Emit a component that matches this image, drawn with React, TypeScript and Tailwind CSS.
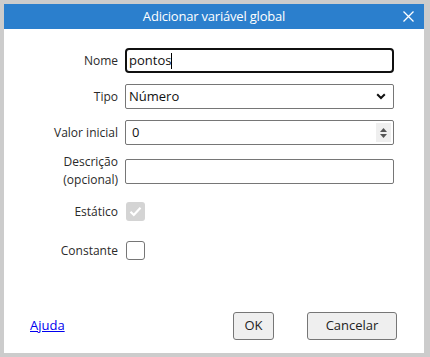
import React from "react";

const font = { fontFamily: '"Open Sans", "Noto Sans", sans-serif' };

function Label({ children }: { children: React.ReactNode }) {
  return (
    <div className="w-[101px] shrink-0 pr-[7px] text-right text-[12px] leading-[18px] text-[#2a2a2a]">
      {children}
    </div>
  );
}

export default function App() {
  return (
    <div className="w-[430px] h-[357px] bg-[#cccccc] pt-[4px] pl-[4px]" style={font}>
      <div className="w-[420px] h-[349px] bg-white flex flex-col">
        {/* title bar */}
        <div className="relative h-[25px] bg-[#2b7fcd] flex items-center justify-center text-white text-[13px]">
          <span className="tracking-[-0.2px]">Adicionar variável global</span>
          <svg className="absolute right-[10px] top-[7px]" width="11" height="11" viewBox="0 0 11 11">
            <path d="M0.5 0.5 L10.5 10.5 M10.5 0.5 L0.5 10.5" stroke="white" strokeWidth="1.3" />
          </svg>
        </div>

        <div className="flex flex-col pl-[20px] pr-[30px]">
          {/* Nome */}
          <div className="flex items-center mt-[19px]">
            <Label>Nome</Label>
            <div className="flex-1 h-[25px] border-2 border-[#101010] rounded-[4px] flex items-center pl-[2px] text-[13px] text-[#111]">
              <span>pontos</span>
              <span className="w-px h-[16px] bg-black" />
            </div>
          </div>
          {/* Tipo */}
          <div className="flex items-center mt-[11px]">
            <Label>Tipo</Label>
            <div className="flex-1 h-[25px] border border-[#767676] rounded-[2px] flex items-center pl-[3px] pr-[7px] text-[13px] text-[#111]">
              <span className="flex-1">Número</span>
              <svg width="10" height="7" viewBox="0 0 10 7">
                <path d="M1.2 1.2 L5 5 L8.8 1.2" stroke="#111" strokeWidth="2" fill="none" />
              </svg>
            </div>
          </div>
          {/* Valor inicial */}
          <div className="flex items-center mt-[11px]">
            <Label>Valor inicial</Label>
            <div className="flex-1 h-[25px] border border-[#767676] rounded-[2px] flex items-center pl-[6px] pr-[2px] text-[13px] text-[#111]">
              <span className="flex-1">0</span>
              <div className="w-[15px] h-[19px] bg-[#efefef] flex flex-col items-center justify-center gap-[2px]">
                <svg width="7" height="4" viewBox="0 0 7 4">
                  <path d="M0 4 L3.5 0 L7 4 Z" fill="#555" />
                </svg>
                <svg width="7" height="4" viewBox="0 0 7 4">
                  <path d="M0 0 L3.5 4 L7 0 Z" fill="#555" />
                </svg>
              </div>
            </div>
          </div>
          {/* Descrição */}
          <div className="flex items-center mt-[8px]">
            <Label>
              Descrição
              <br />
              (opcional)
            </Label>
            <div className="flex-1 h-[25px] border border-[#767676] rounded-[2px]" />
          </div>
          {/* Estático */}
          <div className="flex items-center mt-[13px]">
            <Label>Estático</Label>
            <div className="ml-[1px] w-[19px] h-[19px] rounded-[3px] bg-[#d4d4d4] flex items-center justify-center">
              <svg width="13" height="11" viewBox="0 0 13 11">
                <path d="M1.5 5.8 L4.8 9 L11.5 1.8" stroke="white" strokeWidth="2.2" fill="none" />
              </svg>
            </div>
          </div>
          {/* Constante */}
          <div className="flex items-center mt-[20px]">
            <Label>Constante</Label>
            <div className="ml-[1px] w-[19px] h-[19px] rounded-[3px] border border-[#767676] bg-white" />
          </div>
        </div>

        {/* footer */}
        <div className="mt-auto mb-[13px] flex items-center pl-[26px] pr-[27px]">
          <a className="text-[13px] text-[#0000ee] underline flex-1">Ajuda</a>
          <div className="w-[41px] h-[28px] border border-[#767676] rounded-[3px] bg-[#efefef] flex items-center justify-center text-[13px] text-[#222]">
            OK
          </div>
          <div className="ml-[33px] w-[90px] h-[28px] border border-[#767676] rounded-[3px] bg-[#efefef] flex items-center justify-center text-[13px] text-[#222]">
            Cancelar
          </div>
        </div>
      </div>
    </div>
  );
}
